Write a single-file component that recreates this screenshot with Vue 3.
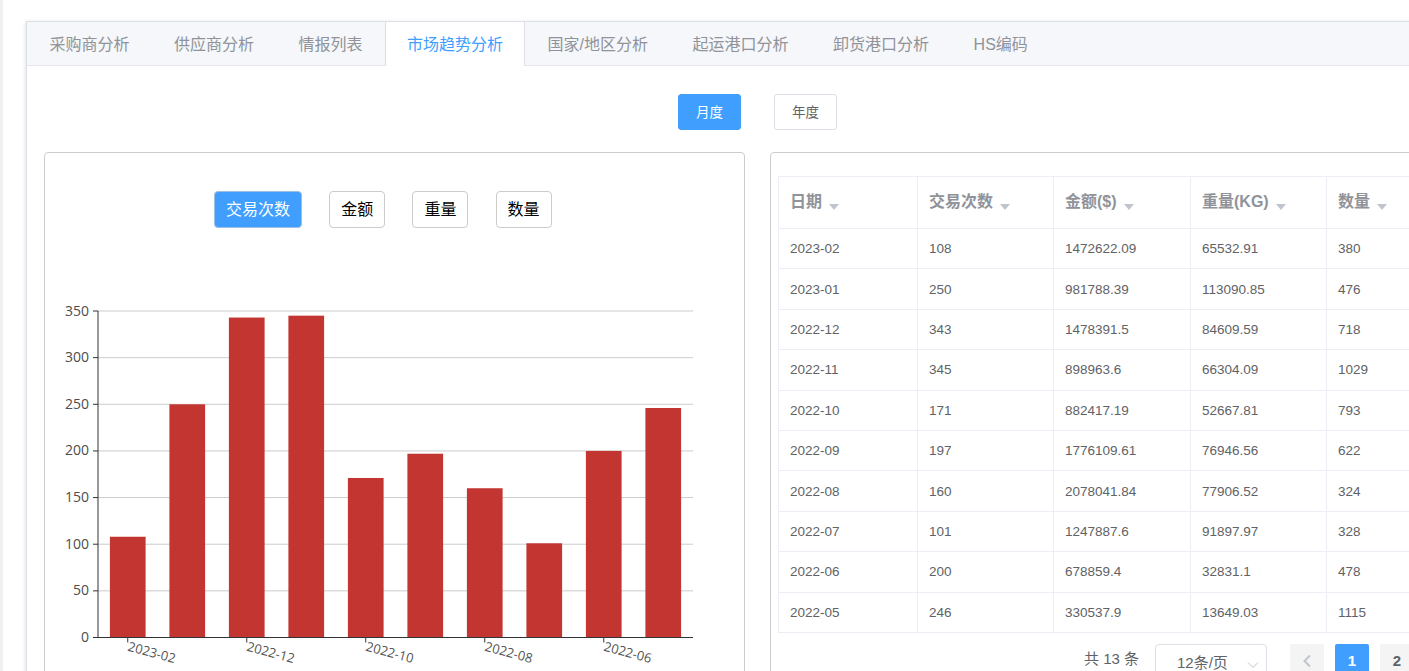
<template>
  <div class="page">
    <div class="tab-card">
      <div class="tab-bar">
        <div
          v-for="tab in tabs"
          :key="tab"
          class="tab-item"
          :class="{ active: tab === activeTab }"
        >
          {{ tab }}
        </div>
      </div>

      <div class="tab-body">
        <div class="period-row">
          <button class="period-btn primary">月度</button>
          <button class="period-btn">年度</button>
        </div>

        <div class="panels">
          <!-- chart -->
          <div class="panel">
            <div class="metric-row">
              <button
                v-for="m in metrics"
                :key="m"
                class="metric-btn"
                :class="{ primary: m === activeMetric }"
              >
                {{ m }}
              </button>
            </div>
            <svg class="chart" width="699" height="440" viewBox="45 250 699 440">
              <line
                v-for="t in yTicks"
                :key="'g' + t"
                x1="98"
                x2="693"
                :y1="yPos(t)"
                :y2="yPos(t)"
                class="grid-line"
              />
              <rect
                v-for="(row, i) in rows"
                :key="row.date"
                class="bar"
                :x="barX(i)"
                :y="yPos(row.count)"
                :width="barWidth"
                :height="baseY - yPos(row.count)"
              />
              <line x1="98" x2="98" y1="311" :y2="baseY" class="axis-line" />
              <line x1="93" x2="693" :y1="baseY" :y2="baseY" class="axis-line" />
              <g v-for="t in yTicks" :key="'t' + t">
                <line x1="93" x2="98" :y1="yPos(t)" :y2="yPos(t)" class="axis-line" />
                <text x="89" :y="yPos(t) + 4.5" text-anchor="end" class="axis-text">{{ t }}</text>
              </g>
              <g v-for="(row, i) in rows" :key="'x' + row.date">
                <template v-if="i % 2 === 0">
                  <line
                    :x1="tickX(i)"
                    :x2="tickX(i)"
                    :y1="baseY"
                    :y2="baseY + 5"
                    class="axis-line"
                  />
                  <text
                    :transform="`translate(${tickX(i) - 0.7} ${baseY + 13}) rotate(15)`"
                    class="axis-text small"
                  >{{ row.date }}</text>
                </template>
              </g>
            </svg>
          </div>

          <!-- table -->
          <div class="panel table-panel">
            <table class="data-table">
              <thead>
                <tr>
                  <th v-for="c in columns" :key="c.label" :style="{ width: c.width + 'px' }">
                    {{ c.label }}<span class="caret"></span>
                  </th>
                </tr>
              </thead>
              <tbody>
                <tr v-for="row in rows" :key="row.date">
                  <td>{{ row.date }}</td>
                  <td>{{ row.count }}</td>
                  <td>{{ row.amount }}</td>
                  <td>{{ row.weight }}</td>
                  <td>{{ row.qty }}</td>
                </tr>
              </tbody>
            </table>

            <div class="pagination">
              <span class="total">共 13 条</span>
              <div class="size-select">
                12条/页
                <svg class="chevron" width="12" height="8" viewBox="0 0 12 8">
                  <path d="M1 1.5 L6 6.5 L11 1.5" fill="none" stroke="#c0c4cc" stroke-width="1" />
                </svg>
              </div>
              <button class="pager disabled">
                <svg width="10" height="14" viewBox="0 0 10 14">
                  <path d="M8 1.5 L2.5 7 L8 12.5" fill="none" stroke="#c0c4cc" stroke-width="2" />
                </svg>
              </button>
              <button class="pager current">1</button>
              <button class="pager">2</button>
              <button class="pager">
                <svg width="10" height="14" viewBox="0 0 10 14">
                  <path d="M2 1.5 L7.5 7 L2 12.5" fill="none" stroke="#606266" stroke-width="2" />
                </svg>
              </button>
            </div>
          </div>
        </div>
      </div>
    </div>
  </div>
</template>

<script setup>
const tabs = ['采购商分析', '供应商分析', '情报列表', '市场趋势分析', '国家/地区分析', '起运港口分析', '卸货港口分析', 'HS编码'];
const activeTab = '市场趋势分析';
const metrics = ['交易次数', '金额', '重量', '数量'];
const activeMetric = '交易次数';

const columns = [
  { label: '日期', width: 139 },
  { label: '交易次数', width: 136 },
  { label: '金额($)', width: 137 },
  { label: '重量(KG)', width: 136 },
  { label: '数量', width: 137 }
];

const rows = [
  { date: '2023-02', count: 108, amount: '1472622.09', weight: '65532.91', qty: 380 },
  { date: '2023-01', count: 250, amount: '981788.39', weight: '113090.85', qty: 476 },
  { date: '2022-12', count: 343, amount: '1478391.5', weight: '84609.59', qty: 718 },
  { date: '2022-11', count: 345, amount: '898963.6', weight: '66304.09', qty: 1029 },
  { date: '2022-10', count: 171, amount: '882417.19', weight: '52667.81', qty: 793 },
  { date: '2022-09', count: 197, amount: '1776109.61', weight: '76946.56', qty: 622 },
  { date: '2022-08', count: 160, amount: '2078041.84', weight: '77906.52', qty: 324 },
  { date: '2022-07', count: 101, amount: '1247887.6', weight: '91897.97', qty: 328 },
  { date: '2022-06', count: 200, amount: '678859.4', weight: '32831.1', qty: 478 },
  { date: '2022-05', count: 246, amount: '330537.9', weight: '13649.03', qty: 1115 }
];

// chart scale
const baseY = 637.5;
const yTicks = [0, 50, 100, 150, 200, 250, 300, 350];
const step = 59.5;
const barWidth = 35.7;

const yPos = (v) => baseY - (v * 326.5) / 350;
const barX = (i) => 98 + i * step + (step - barWidth) / 2;
const tickX = (i) => 98 + i * step + step / 2;
</script>

<style>
html,
body {
  margin: 0;
  overflow: hidden;
  background: #fff;
}
</style>

<style scoped>
.page {
  height: 671px;
  overflow: hidden;
  box-sizing: border-box;
  border-left: 3px solid #f0f0f0;
  padding: 21px 0 0 23px;
  font-family: "Liberation Sans", "Noto Sans CJK SC", sans-serif;
}

.tab-card {
  width: 1464px;
  height: 800px;
  box-sizing: border-box;
  background: #fff;
  border: 1px solid #dcdfe6;
  box-shadow: 0 2px 4px rgba(0, 0, 0, 0.12), 0 0 6px rgba(0, 0, 0, 0.04);
}

.tab-bar {
  display: flex;
  height: 44px;
  box-sizing: border-box;
  background: #f5f7fa;
  border-bottom: 1px solid #e4e7ed;
  padding-left: 0.3px;
}

.tab-item {
  height: 44px;
  box-sizing: border-box;
  padding: 0 21.25px;
  border: 1px solid transparent;
  border-top: 0;
  border-bottom: 0;
  font-size: 16px;
  line-height: 45px;
  color: #909399;
}

.tab-item.active {
  color: #409eff;
  background: #fff;
  border-left-color: #dcdfe6;
  border-right-color: #dcdfe6;
}

.tab-body {
  padding: 28px 17px 0;
}

.period-row {
  display: flex;
  justify-content: center;
  gap: 33px;
  padding-right: 1px;
}

button {
  font-family: inherit;
  cursor: pointer;
}

.period-btn {
  width: 63px;
  height: 36px;
  padding: 0 0 3px;
  border: 1px solid #dcdfe6;
  border-radius: 3px;
  background: #fff;
  color: #606266;
  font-size: 13.5px;
}

.period-btn.primary {
  background: #409eff;
  border-color: #409eff;
  color: #fff;
}

.panels {
  display: grid;
  grid-template-columns: 701px 701px;
  gap: 25px;
  margin-top: 22px;
}

.panel {
  height: 640px;
  box-sizing: border-box;
  border: 1px solid #ccc;
  border-radius: 4px;
  background: #fff;
}

.metric-row {
  display: flex;
  gap: 27.2px;
  padding: 38px 0 0 169px;
}

.metric-btn {
  height: 37px;
  padding: 0 11px 3px;
  border: 1px solid #ccc;
  border-radius: 4px;
  background: #fff;
  color: #000;
  font-size: 16px;
}

.metric-btn.primary {
  background: #409eff;
  border-color: #9cbfe6;
  color: #fff;
}

.chart {
  display: block;
  margin-top: 22px;
}

.grid-line {
  stroke: #ccc;
  stroke-width: 1;
}

.bar {
  fill: #c23531;
}

.axis-line {
  stroke: #333;
  stroke-width: 1;
}

.axis-text {
  font-family: "Open Sans", sans-serif;
  font-size: 14px;
  fill: #4d4d4d;
}

.axis-text.small {
  font-size: 13px;
  fill: #555;
}

.table-panel {
  padding: 23px 7px 0;
}

.data-table {
  width: 685px;
  border-collapse: collapse;
  table-layout: fixed;
  font-size: 13.5px;
  color: #606266;
  border: 1px solid #ebeef5;
}

.data-table th,
.data-table td {
  box-sizing: border-box;
  padding: 0 11px;
  border: 1px solid #ebeef5;
  text-align: left;
}

.data-table th {
  height: 52px;
  padding-bottom: 5px;
  font-size: 16px;
  font-weight: 700;
  color: #909399;
}

.data-table td {
  height: 40.4px;
}

.caret {
  display: inline-block;
  margin-left: 7px;
  vertical-align: -3px;
  border: 5px solid transparent;
  border-top: 6px solid #c0c4cc;
  border-bottom: 0;
}

.pagination {
  display: flex;
  justify-content: flex-end;
  align-items: flex-start;
  margin-top: 11px;
  padding-right: 4px;
}

.total {
  font-size: 15px;
  line-height: 30px;
  color: #606266;
  margin-right: 16px;
}

.size-select {
  position: relative;
  width: 112px;
  height: 40px;
  box-sizing: border-box;
  margin-right: 23px;
  padding-left: 21px;
  border: 1px solid #dcdfe6;
  border-radius: 4px;
  font-size: 15px;
  line-height: 36px;
  color: #606266;
}

.chevron {
  position: absolute;
  right: 7px;
  top: 16px;
}

.pager {
  display: flex;
  align-items: center;
  justify-content: center;
  width: 34px;
  height: 34px;
  margin-left: 11px;
  padding: 0;
  border: 0;
  border-radius: 2px;
  background: #f4f4f5;
  color: #606266;
  font-size: 15px;
  font-weight: 700;
}

.pager.disabled {
  margin-left: 0;
}

.pager.current {
  background: #409eff;
  color: #fff;
}
</style>
